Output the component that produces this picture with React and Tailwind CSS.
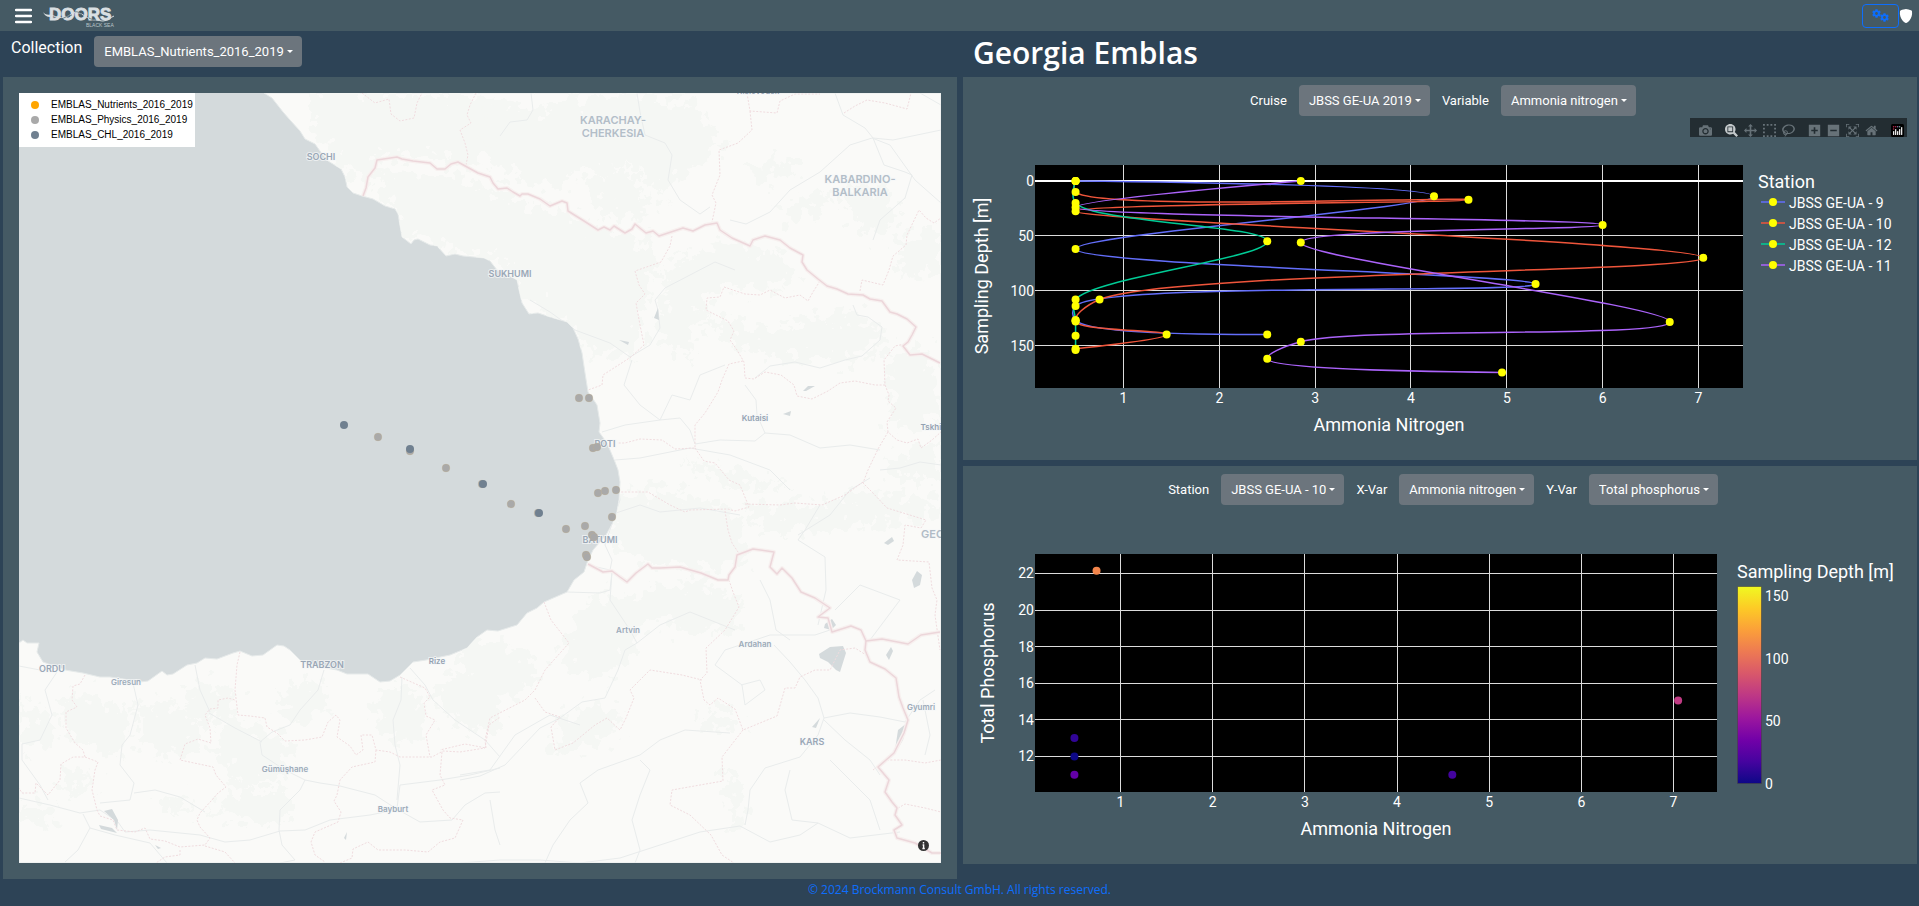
import { BsShieldFill } from "react-icons/bs";
import { FaCog } from "react-icons/fa";

/* ---------- shared controls ---------- */

function Picker({ id, label, options, labelClass }) {
  return (
    <div className="flex items-center gap-3">
      <label htmlFor={id} className={labelClass || "text-[13px] leading-5"}>
        {label}
      </label>
      <div className="relative">
        <select
          id={id}
          className="h-[31px] cursor-pointer appearance-none rounded bg-[#6c757d] pr-[18px] pl-[10px] text-[13px] text-white [field-sizing:content]"
        >
          {options.map((o) => (
            <option key={o}>{o}</option>
          ))}
        </select>
        <span className="pointer-events-none absolute top-[14px] right-[9px] border-x-[3px] border-t-[3px] border-x-transparent border-t-white" />
      </div>
    </div>
  );
}

function Logo() {
  return (
    <svg width="72" height="24" viewBox="43 4 72 24" role="img" aria-label="Doors Black Sea">
      <text x="49" y="20" className="font-['Liberation_Sans',sans-serif] text-[17px] font-bold" fill="#d9dfe2" stroke="#d9dfe2" strokeWidth="0.9">
        DOORS
      </text>
      <path d="M43 12c1 2 4 3 8 2.500L50 17c-3 0-6-2-7-5z" fill="#d9dfe2" />
      <path d="M50 15c5 1 10 4 16 2 5-2 8-6 13-4 6 2 11 8 17 7 3 0 4 1 7 1 5 0 8-4 11-5" fill="none" stroke="#d9dfe2" strokeWidth="1" />
      <path d="M61 19c4-1 7-4 11-4M75 12c2-1 5 1 7 3M89 18c2 1 4 2 7 2" fill="none" stroke="#455a64" strokeWidth="0.7" />
      <text x="86" y="27" className="font-['Liberation_Sans',sans-serif] text-[5px]" fill="#bcc5c9">
        BLACK SEA
      </text>
    </svg>
  );
}

/* ---------- map ---------- */

const COAST =
  "M264 93L272 98L283 112L290 120L300 131L305 139L315 144L320 151L328 161L341 169L345 177L347 187L353 193L362 196L373 199L385 206L395 209L398 214L400 226L402 237L411 244L414 240L418 239L430 245L437 246L446 256L455 254L463 256L484 258L490 261L497 270L510 276L517 280L519 290L522 303L529 314L538 313L550 317L567 322L573 328L578 339L582 353L585 373L588 392L593 399L597 405L600 423L599 432L607 443L615 462L618 470L620 482L619 500L616 517L606 535L593 550L587 563L584 572L574 580L567 592L544 602L537 608L527 613L517 625L498 631L487 630L477 637L467 648L450 655L426 660L413 662L400 675L390 681L380 682L368 674L347 674L337 670L320 667L302 662L290 650L284 646L277 645L263 655L252 656L240 651L233 653L217 659L205 658L197 663L187 665L173 674L167 675L162 671L148 681L140 682L130 680L110 677L100 677L83 673L65 670L43 662L37 652L39 643L27 643L23 640L19 643L19 863L941 863L941 93Z";

const FRONTIERS = [
  "363,196 366,188 368,177 375,168 377,160 397,157 402,159 413,161 430,163 437,169 445,169 451,164 458,162 467,167 478,173 490,177 493,183 498,189 507,188 513,192 520,196 522,194 528,194 540,199 550,206 562,201 567,203 568,211 584,221 598,230 604,227 610,230 614,226 625,233 632,229 635,224 641,229 646,233 653,231 659,236 668,233 683,228 693,231 705,225 717,223 720,230 732,238 750,246 753,240 765,236 780,240 790,248 803,255 802,262 807,270 818,279 827,286 837,289 848,294 863,295 870,299 882,301 890,312 897,314 907,319 916,327 912,335 908,342 903,346 910,355 922,354 930,358 940,363",
  "588,564 603,572 612,571 620,577 627,582 636,573 648,564 652,568 660,568 680,567 701,573 718,580 728,580 729,575 735,567 737,555 753,549 774,552 770,567 777,574 782,568 792,578 801,592 815,598 830,608 818,617 828,618 832,632 851,626 861,630 866,641 882,639 908,644 921,635 940,632",
  "866,641 865,650 870,662 885,669 896,678 899,697 903,708 908,720 904,733 894,753 886,760 878,767 889,780 885,792 892,802 897,808 895,815 902,825 894,830 897,838 915,843 932,853 941,853",
];

const REGION_BORDERS = [
  "362,93 375,103 389,99 391,114 400,121 414,118 417,103 422,93",
  "476,93 470,105 467,115 471,123 460,130 465,143 468,155 466,165",
  "747,93 750,111 777,113 780,101 795,94 820,94",
  "750,111 752,130 738,143 719,150 720,175 712,195 716,203 712,222",
  "844,113 855,106 867,100 885,103 907,109 911,93",
  "672,236 670,246 661,262 635,271 639,285 645,294 636,303 640,325 644,345 631,357 603,375 602,385 588,390",
  "820,281 813,292 808,301 800,295 785,298 770,290 760,295 745,294 724,287 720,297 707,298 706,310 728,321 734,331 730,340 737,350 744,362 745,378 754,379 765,372 781,375 794,385 797,396 812,399 828,391 840,383 855,381 875,385 885,385 884,360 895,346 905,344",
  "860,291 862,280 883,285 889,270 893,256 906,245 907,235 919,210 926,218 934,223 941,218",
  "885,385 889,395 888,401 896,408 887,422 888,432 897,440 907,443 918,439 921,448 932,440 941,432",
  "743,361 729,364 722,380 718,392 705,413 695,425 695,448 675,449 662,440 640,439 625,443 617,443",
  "695,448 704,461 715,463 729,480 740,485 749,507 735,511 728,509 690,510 685,512 670,505 648,492 620,492",
  "888,432 878,449 868,470 863,483 872,492 887,508 900,512 926,520 921,528 905,525 903,545 897,560 929,562 932,588 937,600 935,615 940,650",
  "725,511 728,530 732,543 740,555",
  "863,482 845,495 822,505 795,503 780,505 745,504",
  "729,580 733,592 739,607 725,630 706,648 707,673 700,680 704,700 710,705 718,698 735,709 743,730 777,716 785,688 795,688 800,677 815,670 830,670 840,650 855,648 866,655",
  "743,730 722,757 723,781 700,785 672,790 670,805 690,815 711,835 722,855 734,863",
  "544,602 551,620 569,643 545,670 535,690 525,700 490,718 485,740 486,748 465,744 440,750",
  "535,698 545,712 560,717 551,727 555,750 573,743 595,725 607,718 620,730 626,718 634,698 630,690 650,670 682,675 702,680",
  "240,652 237,665 235,690 238,715 250,716 265,718 267,727 277,733 285,741 305,740 322,737 328,722 336,715 340,720 337,737 350,746 356,755 363,750 361,735 372,735 376,750 390,752 400,757 432,757 443,751 460,752 485,748 489,725 500,717",
  "400,677 425,688 430,697 424,703 426,716 435,720 426,735 430,757",
  "376,750 375,762 352,767 340,780 337,795 334,801 341,812 338,822 315,832 311,842 315,855 325,862",
  "85,675 80,684 73,686 72,700 77,707 66,712 66,728 75,743 83,750 85,757 73,757 61,764 60,780 48,795 36,783 35,793 22,793 19,788",
  "85,757 98,762 95,770 92,790 97,810 100,816 113,820 117,830 135,832 145,828 150,839 165,841 180,847 205,845 210,838 200,827 197,820 200,813 212,800 218,793 226,787 216,775 213,767 180,760 185,744 198,739 211,743 210,728 205,715 210,709 218,708 218,700 228,698 235,700",
  "340,863 352,858 353,849 368,842 378,850 405,850 428,852 440,842 455,838 463,820 450,818 443,810 432,790 445,785 440,775 442,752",
  "180,850 180,855 165,857 156,863",
  "205,846 225,852 235,863",
  "873,770 885,760 905,760 925,763 941,760",
  "895,810 905,804 925,808 941,812",
];

const ROADS = [
  "531,93 533,110 527,120 510,122 500,136",
  "637,93 640,112 645,135 665,143 672,155 668,180 680,200 700,214 710,207",
  "730,220 746,224 770,212 790,190 820,172 850,145 872,138 890,145 915,180 941,203",
  "835,93 843,115 865,128 873,138 893,140 941,130",
  "873,138 884,165 905,172 912,175 905,198 880,220 873,240",
  "941,105 920,93",
  "530,300 550,312 575,330 610,343 630,357 650,345 660,328 658,310 655,300 665,288 690,275 715,262 735,270",
  "853,305 857,315 868,317 882,327 880,340 862,356 845,360 820,368 795,362 770,366 755,378",
  "602,432 625,425 660,420 680,418 690,430 695,444 720,440 755,441 765,433 790,435 820,448 850,445 880,450",
  "632,360 624,385 640,405 660,420 672,395 690,400 700,375 725,365",
  "765,433 757,415 756,400 745,385",
  "615,460 640,458 690,448 730,455 770,470 790,490",
  "880,470 900,468 920,462 941,465",
  "588,565 610,570 612,560 605,545 620,500 618,480",
  "567,592 600,593 610,590 612,572 610,600 622,618 630,630 637,643 625,650 618,670 605,698 582,702 560,718 540,728 505,765 480,776 460,780",
  "637,643 660,625 690,612 715,622 735,630",
  "774,645 790,662 805,680 818,698 824,718 818,735 800,757 765,768 750,790 748,810 745,825",
  "741,685 760,680 765,690 745,705 742,685 715,665 725,650 770,635 815,635 830,630",
  "824,720 845,740 870,760 880,775",
  "824,718 850,713 880,717 905,722 920,700 935,690",
  "923,700 930,735 925,755",
  "460,775 490,770 515,735 550,715 580,725",
  "580,783 598,770 640,755 660,740 685,730 730,733",
  "580,783 588,803 570,820 553,845 545,863",
  "460,863 500,860 540,860 580,863 620,858 660,845 700,832 740,826 770,842 800,835 818,823 850,838 900,832",
  "640,760 650,770 640,795 632,820 640,850 635,863",
  "790,770 785,790 792,820 818,823",
  "830,760 850,780 870,800 880,830",
  "19,798 50,805 80,813 100,810 118,822 125,832 150,830 200,835 225,842 250,840 280,831 305,830 330,820 370,815 395,810",
  "83,814 90,828 115,835 150,843 167,863",
  "90,828 78,850 65,862",
  "279,830 280,810 300,790 305,780 320,783 340,786 375,795 395,808 420,822 452,820 465,805 485,793 500,792",
  "279,830 282,845 295,860 280,863",
  "397,808 400,785 440,780 470,775 500,768",
  "324,670 318,690 300,710 290,725 272,732 260,742 262,755 285,770 305,780",
  "209,713 235,728 262,742",
  "410,668 425,685 433,700 455,720 485,740 500,757",
  "402,677 401,700 393,720 395,745 400,765 397,800",
  "19,666 40,670 60,668 85,672",
  "57,672 45,690 52,715 40,740 22,744 22,760 40,785 48,800",
  "133,683 138,705 130,735 122,745 120,765 134,783 130,800 100,803",
  "134,793 155,790 180,797 205,812",
  "195,665 200,690 210,712",
  "490,800 495,830 500,845",
  "820,505 805,530 798,540 825,557 826,590 818,625",
  "798,535 830,515 850,490 870,478",
  "610,515 640,505 660,512 700,508 740,515",
  "760,580 770,600 776,630 790,640",
  "870,640 900,600 860,585 835,610",
];

const WOODS = [
  "310,93 480,93 520,110 500,150 470,165 430,160 380,155 365,190 340,160 310,130",
  "375,170 450,175 500,195 560,215 640,240 660,265 640,320 640,350 600,360 560,320 520,300 500,262 440,245 400,235",
  "480,100 540,110 600,93 690,100 725,145 690,170 660,200 640,165 600,170 570,175 560,190 520,180 490,160",
  "600,165 640,175 650,215 610,220 590,190",
  "560,225 640,240 620,275 590,300 560,280",
  "665,270 720,240 780,255 800,280 770,290 720,285 700,310 690,360 660,340",
  "690,310 760,330 860,310 890,340 850,360 780,360 740,345",
  "745,165 790,160 800,175 760,180",
  "780,205 830,190 835,200 790,225",
  "850,185 890,190 900,215 870,240 850,215",
  "895,240 941,225 941,270 905,280",
  "600,500 640,490 700,495 740,520 750,560 700,570 640,560 610,535",
  "640,595 700,580 740,600 735,630 690,635 650,615 640,640 610,680 570,670 560,640 590,600",
  "750,505 830,500 880,490 941,500 930,520 870,525 800,530 760,530",
  "460,640 500,640 540,660 530,690 490,700 460,680",
  "200,680 235,690 235,715 200,725 180,705",
  "55,700 100,695 130,720 125,760 90,745 70,740",
  "20,700 50,715 50,745 25,750",
  "130,700 190,710 200,745 160,760 140,735",
  "225,715 290,740 285,775 240,790 215,750",
  "280,690 320,680 330,710 300,725 280,715",
  "380,690 420,690 430,730 400,745 375,725",
  "430,690 500,660 500,730 460,730",
  "240,790 290,790 290,825 250,825 210,810",
  "20,800 55,810 60,830 20,820",
  "560,720 600,700 625,720 600,745 555,755",
  "700,710 735,710 740,735 705,730",
  "725,770 740,780 745,820 735,830 725,800",
  "885,460 941,440 941,480 900,480",
  "680,460 740,470 790,490 730,490",
  "885,350 930,350 941,410 925,430 890,425",
  "158,795 185,797 195,815 165,815",
  "60,770 85,765 90,785 60,795",
];

const LAKES = [
  "819,654 830,647 843,646 846,653 840,672 836,670 828,662 820,658",
  "825,624 832,619 836,625 831,630 824,628",
  "912,580 917,571 922,575 920,585 914,588",
  "884,543 892,537 894,541 888,545",
  "886,655 891,647 893,651 889,660",
  "895,750 898,730 907,723 903,740 897,750",
  "803,391 808,386 815,386 806,391",
  "783,414 791,411 790,416",
  "99,825 112,828 117,833 101,829",
  "104,811 112,809 118,820 117,830 114,820",
  "344,838 347,832 346,840",
  "155,845 161,848 158,849",
  "654,318 658,308 659,320",
  "619,340 629,342 628,345",
  "812,727 820,718 816,728",
];

const LABELS = [
  { t: "KARACHAY-", x: 613, y: 124, s: "region" },
  { t: "CHERKESIA", x: 613, y: 137, s: "region" },
  { t: "KABARDINO-", x: 860, y: 183, s: "region" },
  { t: "BALKARIA", x: 860, y: 196, s: "region" },
  { t: "GEORGIA", x: 946, y: 538, s: "country" },
  { t: "Kislovodsk", x: 758, y: 94, s: "town" },
  { t: "SOCHI", x: 321, y: 160, s: "city" },
  { t: "SUKHUMI", x: 510, y: 277, s: "city" },
  { t: "POTI", x: 605, y: 447, s: "city" },
  { t: "BATUMI", x: 600, y: 543, s: "city" },
  { t: "TRABZON", x: 322, y: 668, s: "city" },
  { t: "ORDU", x: 52, y: 672, s: "city" },
  { t: "KARS", x: 812, y: 745, s: "city" },
  { t: "Kutaisi", x: 755, y: 421, s: "town" },
  { t: "Tskhinvali", x: 940, y: 430, s: "town" },
  { t: "Rize", x: 437, y: 664, s: "town" },
  { t: "Giresun", x: 126, y: 685, s: "small" },
  { t: "Artvin", x: 628, y: 633, s: "small" },
  { t: "Ardahan", x: 755, y: 647, s: "small" },
  { t: "Gyumri", x: 921, y: 710, s: "small" },
  { t: "Gümüşhane", x: 285, y: 772, s: "small" },
  { t: "Bayburt", x: 393, y: 812, s: "small" },
];

const LABEL_STYLE = {
  country: "text-[11px] fill-[#b0bbc6]",
  region: "text-[11px] fill-[#b3bec8]",
  city: "text-[9px] fill-[#9aa7b6]",
  town: "text-[8px] fill-[#94a2b2]",
  small: "text-[8px] fill-[#9dabb9]",
};

const PHYSICS = [
  [378, 437], [410, 451], [446, 468], [482, 484], [511, 504], [538, 513], [566, 529], [585, 526],
  [592, 535], [594, 537], [612, 517], [586, 555], [587, 557], [598, 493], [605, 491], [616, 490],
  [579, 398], [589, 398], [593, 448], [597, 447],
];
const CHLOROPHYLL = [[344, 425], [410, 449], [483, 484], [539, 513]];

function StationMap() {
  return (
    <svg viewBox="19 93 922 770" className="block h-auto w-full" role="img" aria-label="Map of sampling stations in the eastern Black Sea">
      <defs>
        <filter id="ragged" x="-10%" y="-10%" width="120%" height="120%">
          <feTurbulence type="fractalNoise" baseFrequency="0.09" numOctaves="3" seed="4" />
          <feDisplacementMap in="SourceGraphic" scale="44" xChannelSelector="R" yChannelSelector="G" />
        </filter>
        <clipPath id="land"><path d={COAST} /></clipPath>
      </defs>
      <rect x="19" y="93" width="922" height="770" fill="#d4dadc" />
      <path d={COAST} fill="#fafaf8" stroke="#e6eaea" strokeWidth="1" strokeLinejoin="round" />
      <g clipPath="url(#land)">
        <g fill="#f5f7f4" filter="url(#ragged)">
          {WOODS.map((p) => <polygon key={p} points={p} />)}
        </g>
        <g fill="none" stroke="#e9ecec" strokeWidth="1" strokeLinejoin="round">
          {ROADS.map((p) => <polyline key={p} points={p} />)}
        </g>
        <g fill="#d4dadc">
          {LAKES.map((p) => <polygon key={p} points={p} />)}
        </g>
        <g fill="none" stroke="#f0dcdf" strokeWidth="1" strokeDasharray="2 1.5" strokeLinejoin="round">
          {REGION_BORDERS.map((p) => <polyline key={p} points={p} />)}
        </g>
        <g fill="none" strokeLinejoin="round">
          {FRONTIERS.map((p) => <polyline key={p} points={p} stroke="#f7f0ef" strokeWidth="4" />)}
          {FRONTIERS.map((p) => <polyline key={p} points={p} stroke="#ecd6da" strokeWidth="1.5" />)}
        </g>
      </g>
      <g textAnchor="middle" stroke="#f6f8f8" strokeWidth="2" strokeOpacity="0.7" paintOrder="stroke" className="font-['Inter',sans-serif] font-semibold">
        {LABELS.map((l) => (
          <text key={l.t} x={l.x} y={l.y} className={LABEL_STYLE[l.s]}>{l.t}</text>
        ))}
      </g>
      {PHYSICS.map(([x, y]) => (
        <circle key={x + "-" + y} cx={x} cy={y} r="3.9" fill="#a9a9a9" stroke="#d0b27a" strokeOpacity="0.5" strokeWidth="0.4" />
      ))}
      {CHLOROPHYLL.map(([x, y]) => <circle key={x} cx={x} cy={y} r="4" fill="#708090" />)}
    </svg>
  );
}

const COLLECTIONS = [
  ["EMBLAS_Nutrients_2016_2019", "bg-[#ffa500]"],
  ["EMBLAS_Physics_2016_2019", "bg-[#a9a9a9]"],
  ["EMBLAS_CHL_2016_2019", "bg-[#708090]"],
];

function MapLegend() {
  return (
    <ul className="absolute top-0 left-0 bg-white pt-1 pr-[2px] pb-[5px] pl-3 font-['Liberation_Sans',sans-serif] text-[10px] leading-[15px] text-black">
      {COLLECTIONS.map(([name, color]) => (
        <li key={name} className="flex items-center gap-3">
          <span className={"size-2 rounded-full " + color} />
          {name}
        </li>
      ))}
    </ul>
  );
}

/* ---------- depth profile chart ---------- */

const px = (v) => 1123.5 + (v - 1) * 95.83;
const py = (d) => 181 + d * 1.097;

const SERIES = [
  { name: "JBSS GE-UA - 9", color: "#636efa", pts: [[0.5, 0], [4.24, 14], [0.5, 62], [5.3, 94], [0.5, 114], [0.5, 127], [2.5, 140]] },
  { name: "JBSS GE-UA - 10", color: "#ef553b", pts: [[0.5, 0], [0.5, 10], [4.6, 17], [0.5, 27.5], [7.05, 70], [0.75, 108], [0.5, 128], [1.45, 140], [0.5, 153]] },
  { name: "JBSS GE-UA - 12", color: "#00cc96", pts: [[0.5, 0], [0.5, 20], [2.5, 55], [0.5, 108], [0.5, 127], [0.5, 141], [0.5, 154]] },
  { name: "JBSS GE-UA - 11", color: "#ab63fa", pts: [[2.85, 0], [0.5, 24], [6, 40], [2.85, 56], [6.7, 128.5], [2.85, 146.5], [2.5, 162], [4.95, 174.5]] },
];

// Centripetal Catmull-Rom handles on both sides of the middle point
function handles(a, b, c) {
  const d1 = [a[0] - b[0], a[1] - b[1]];
  const d2 = [c[0] - b[0], c[1] - b[1]];
  const l1 = Math.pow(d1[0] * d1[0] + d1[1] * d1[1], 0.25);
  const l2 = Math.pow(d2[0] * d2[0] + d2[1] * d2[1], 0.25);
  const n = [0, 1].map((k) => l2 * l2 * d1[k] - l1 * l1 * d2[k]);
  const before = 3 * l2 * (l1 + l2);
  const after = 3 * l1 * (l1 + l2);
  return [
    [b[0] + n[0] / before, b[1] + n[1] / before],
    [b[0] - n[0] / after, b[1] - n[1] / after],
  ];
}

function splinePath(data) {
  const p = data.map(([x, y]) => [px(x), py(y)]);
  const t = [];
  for (let i = 1; i < p.length - 1; i++) t.push(handles(p[i - 1], p[i], p[i + 1]));
  let d = `M${p[0]}Q${t[0][0]} ${p[1]}`;
  for (let i = 2; i < p.length - 1; i++) d += `C${t[i - 2][1]} ${t[i - 1][0]} ${p[i]}`;
  return d + `Q${t[t.length - 1][1]} ${p[p.length - 1]}`;
}

function DepthChart() {
  return (
    <svg viewBox="963 116 954 344" className="block h-auto w-full" fill="#fff" role="img" aria-label="Ammonia nitrogen by sampling depth">
      <rect x="1035" y="165" width="708" height="223" fill="#000" />
      <g stroke="#dcdcdc" strokeWidth="1" shapeRendering="crispEdges">
        {[1, 2, 3, 4, 5, 6, 7].map((v) => <path key={v} d={`M${px(v)} 165V388`} />)}
        {[50, 100, 150].map((v) => <path key={v} d={`M1035 ${py(v)}H1743`} />)}
      </g>
      <path d="M1035 181H1743" stroke="#fff" strokeWidth="2" />
      {SERIES.map((s) => <path key={s.name} d={splinePath(s.pts)} fill="none" stroke={s.color} strokeWidth="1.5" />)}
      {SERIES.map((s) => s.pts.map(([x, y]) => <circle key={s.name + x + y} cx={px(x)} cy={py(y)} r="4" fill="#ff0" />))}
      <g className="text-[14px]">
        {[1, 2, 3, 4, 5, 6, 7].map((v) => <text key={v} x={px(v)} y="403" textAnchor="middle">{v}</text>)}
        {[0, 50, 100, 150].map((v) => <text key={v} x="1034" y={py(v) + 5} textAnchor="end">{v}</text>)}
      </g>
      <g className="text-[18px]">
        <text x="1389" y="431" textAnchor="middle">Ammonia Nitrogen</text>
        <text transform="translate(988 276) rotate(-90)" textAnchor="middle">Sampling Depth [m]</text>
        <text x="1758" y="188">Station</text>
      </g>
      {SERIES.map((s, i) => (
        <g key={s.name}>
          <path d={`M1761 ${202 + i * 21}h24`} stroke={s.color} strokeWidth="1.5" />
          <circle cx="1773" cy={202 + i * 21} r="4" fill="#ff0" />
          <text x="1789" y={208 + i * 21} className="text-[14px]">{s.name}</text>
        </g>
      ))}
    </svg>
  );
}

/* ---------- modebar ---------- */

const ICONS = {
  camera: [1000, "m500 450c-83 0-150-67-150-150 0-83 67-150 150-150 83 0 150 67 150 150 0 83-67 150-150 150z m400 150h-120c-16 0-34 13-39 29l-31 93c-6 15-23 28-40 28h-340c-16 0-34-13-39-28l-31-94c-6-15-23-28-40-28h-120c-55 0-100-45-100-100v-450c0-55 45-100 100-100h800c55 0 100 45 100 100v450c0 55-45 100-100 100z m-400-550c-138 0-250 112-250 250 0 138 112 250 250 250 138 0 250-112 250-250 0-138-112-250-250-250z m365 380c-19 0-35 16-35 35 0 19 16 35 35 35 19 0 35-16 35-35 0-19-16-35-35-35z"],
  zoom: [1000, "m1000-25l-250 251c40 63 63 138 63 218 0 224-182 406-407 406-224 0-406-182-406-406s183-406 407-406c80 0 155 22 218 62l250-250 125 125z m-812 250l0 438 437 0 0-438-437 0z m62 375l313 0 0-312-313 0 0 312z"],
  pan: [1000, "m1000 350l-187 188 0-125-250 0 0 250 125 0-188 187-187-187 125 0 0-250-250 0 0 125-188-188 186-187 0 125 252 0 0-250-125 0 187-188 188 188-125 0 0 250 250 0 0-126 187 188z"],
  select: [1000, "m0 850l0-143 143 0 0 143-143 0z m286 0l0-143 143 0 0 143-143 0z m285 0l0-143 143 0 0 143-143 0z m286 0l0-143 143 0 0 143-143 0z m-857-286l0-143 143 0 0 143-143 0z m857 0l0-143 143 0 0 143-143 0z m-857-285l0-143 143 0 0 143-143 0z m857 0l0-143 143 0 0 143-143 0z m-857-286l0-143 143 0 0 143-143 0z m286 0l0-143 143 0 0 143-143 0z m285 0l0-143 143 0 0 143-143 0z m286 0l0-143 143 0 0 143-143 0z"],
  lasso: [1031, "m1018 538c-36 207-290 336-568 286-277-48-473-256-436-463 10-57 36-108 76-151-13-66 11-137 68-183 34-28 75-41 114-42l-55-70 0 0c-2-1-3-2-4-3-10-14-8-34 5-45 14-11 34-8 45 4 1 1 2 3 2 5l0 0 113 140c16 11 31 24 45 40 4 3 6 7 8 11 48-3 100 0 151 9 278 48 473 255 436 462z m-624-379c-80 14-149 48-197 96 42 42 109 47 156 9 33-26 47-66 41-105z m-187-74c-19 16-33 37-39 60 50-32 109-55 174-68-42-25-95-24-135 8z m360 75c-34-7-69-9-102-8 8 62-16 128-68 170-73 59-175 54-244-5-9 20-16 40-20 61-28 159 121 317 333 354s407-60 434-217c28-159-121-318-333-355z"],
  plus: [875, "m1 787l0-875 875 0 0 875-875 0z m687-500l-187 0 0-187-125 0 0 187-188 0 0 125 188 0 0 187 125 0 0-187 187 0 0-125z"],
  minus: [875, "m0 788l0-876 875 0 0 876-875 0z m688-500l-500 0 0 125 500 0 0-125z"],
  autoscale: [1000, "m250 850l-187 0-63 0 0-62 0-188 63 0 0 188 187 0 0 62z m688 0l-188 0 0-62 188 0 0-188 62 0 0 188 0 62-62 0z m-875-938l0 188-63 0 0-188 0-62 63 0 187 0 0 62-187 0z m875 188l0-188-188 0 0-62 188 0 62 0 0 62 0 188-62 0z m-125 188l-1 0-93-94-156 156 156 156 92-93 2 0 0 250-250 0 0-2 93-92-156-156-156 156 94 92 0 2-250 0 0-250 0 0 93 93 157-156-157-156-93 94 0 0 0-250 250 0 0 0-94 93 156 157 156-157-93-93 0 0 250 0 0 250z"],
  home: [928, "m786 296v-267q0-15-11-26t-25-10h-214v214h-143v-214h-214q-15 0-25 10t-11 26v267q0 1 0 2t0 2l321 264 321-264q1-1 1-4z m124 39l-34-41q-5-5-12-6h-2q-7 0-12 3l-386 322-386-322q-7-4-13-4-7 2-12 7l-35 41q-4 5-3 13t6 12l401 334q18 15 42 15t43-15l136-114v109q0 8 5 13t13 5h107q8 0 13-5t5-13v-227l122-102q5-5 6-12t-4-13z"],
};

function ModeButton({ icon, label, active }) {
  const [w, d] = ICONS[icon];
  return (
    <button type="button" aria-label={label} className="flex w-[19px] justify-center">
      <svg viewBox={`0 0 ${w} 1000`} className={"h-[13px] w-[13px] " + (active ? "fill-[#c4c9cb]" : "fill-[#677278]")}>
        <path d={d} transform="matrix(1 0 0 -1 0 850)" />
      </svg>
    </button>
  );
}

function Modebar() {
  return (
    <div className="absolute top-[41px] right-[10px] flex h-[19px] items-end gap-[7px] bg-[#232d32] pl-[6px]">
      <ModeButton icon="camera" label="Download plot as a png" />
      <div className="flex">
        <ModeButton icon="zoom" label="Zoom" active />
        <ModeButton icon="pan" label="Pan" />
        <ModeButton icon="select" label="Box Select" />
        <ModeButton icon="lasso" label="Lasso Select" />
      </div>
      <div className="flex">
        <ModeButton icon="plus" label="Zoom in" />
        <ModeButton icon="minus" label="Zoom out" />
        <ModeButton icon="autoscale" label="Autoscale" />
        <ModeButton icon="home" label="Reset axes" />
      </div>
      <a href="#plotly" aria-label="Produced with Plotly" className="flex w-[19px] justify-center">
        <svg viewBox="0 0 13 13" className="h-[13px] w-[13px]">
          <rect width="13" height="13" rx="1.5" fill="#000" />
          <g fill="#e8e8e8">
            <rect x="2" y="7" width="1.3" height="4" rx="0.6" />
            <rect x="4" y="5" width="1.3" height="6" rx="0.6" />
            <rect x="6" y="7" width="1.3" height="4" rx="0.6" />
            <rect x="8" y="5" width="1.3" height="6" rx="0.6" />
            <rect x="10" y="3" width="1.3" height="8" rx="0.6" />
          </g>
          <g fill="#b5274d">
            <circle cx="2.6" cy="2.8" r="0.8" />
            <circle cx="4.6" cy="2.8" r="0.8" />
            <circle cx="2.6" cy="5" r="0.8" />
          </g>
          <circle cx="6.6" cy="2.8" r="0.8" fill="#8d6d9e" />
          <circle cx="8.6" cy="2.8" r="0.8" fill="#6aa5a5" />
        </svg>
      </a>
    </div>
  );
}

/* ---------- scatter chart ---------- */

const qx = (v) => 1120.5 + (v - 1) * 92.17;
const qy = (v) => 573.4 + (22 - v) * 18.3;

const SAMPLES = [
  [0.74, 22.15, "#f3854b"],
  [0.5, 13, "#310597"],
  [0.5, 12, "#0d0887"],
  [0.5, 11, "#6300a7"],
  [4.6, 11, "#43039e"],
  [7.05, 15.05, "#c03a83"],
];

const PLASMA = ["#0d0887", "#46039f", "#7201a8", "#9c179e", "#bd3786", "#d8576b", "#ed7953", "#fb9f3a", "#fdca26", "#f0f921"];

function ScatterChart() {
  return (
    <svg viewBox="963 505 954 359" className="block h-auto w-full" fill="#fff" role="img" aria-label="Total phosphorus against ammonia nitrogen">
      <defs>
        <linearGradient id="depthScale" x1="0" y1="1" x2="0" y2="0">
          {PLASMA.map((c, i) => <stop key={c} offset={i / 9} stopColor={c} />)}
        </linearGradient>
      </defs>
      <rect x="1035" y="554" width="682" height="238" fill="#000" />
      <g stroke="#dcdcdc" strokeWidth="1" shapeRendering="crispEdges">
        {[1, 2, 3, 4, 5, 6, 7].map((v) => <path key={v} d={`M${qx(v)} 554V792`} />)}
        {[12, 14, 16, 18, 20, 22].map((v) => <path key={v} d={`M1035 ${qy(v)}H1717`} />)}
      </g>
      {SAMPLES.map(([x, y, c]) => <circle key={c} cx={qx(x)} cy={qy(y)} r="4" fill={c} />)}
      <g className="text-[14px]">
        {[1, 2, 3, 4, 5, 6, 7].map((v) => <text key={v} x={qx(v)} y="807" textAnchor="middle">{v}</text>)}
        {[12, 14, 16, 18, 20, 22].map((v) => <text key={v} x="1034" y={qy(v) + 5} textAnchor="end">{v}</text>)}
        {[0, 50, 100, 150].map((v) => <text key={v} x="1765" y={789 - v * 1.253}>{v}</text>)}
      </g>
      <g className="text-[18px]">
        <text x="1376" y="835" textAnchor="middle">Ammonia Nitrogen</text>
        <text transform="translate(994 673) rotate(-90)" textAnchor="middle">Total Phosphorus</text>
        <text x="1737" y="578">Sampling Depth [m]</text>
      </g>
      <rect x="1737.5" y="586.5" width="24" height="197" fill="url(#depthScale)" stroke="#444" strokeOpacity="0.6" />
    </svg>
  );
}

/* ---------- page ---------- */

export default function App() {
  return (
    <div className="flex min-h-screen flex-col bg-[#2d4356] font-['Roboto',sans-serif] text-white">
      <header className="flex h-[31px] items-center bg-[#455a64] pr-[6px] pl-[15px]">
        <button type="button" aria-label="Open menu">
          <svg width="17" height="16" viewBox="0 0 17 16" stroke="#fff" strokeWidth="2.4" strokeLinecap="round">
            <path d="M1 2H16M1 8H16M1 14H16" />
          </svg>
        </button>
        <a href="#home" className="ml-[11px]">
          <Logo />
        </a>
        <div className="ml-auto flex items-center">
          <button type="button" aria-label="Settings" className="flex h-6 w-[37px] items-center justify-center rounded border border-[#0d6efd] text-[#0d6efd]">
            <FaCog className="mb-1 size-[9px]" />
            <FaCog className="mt-1 -ml-px size-[9px]" />
          </button>
          <BsShieldFill className="size-[14px]" />
        </div>
      </header>

      <div className="grid grid-cols-2 gap-x-[6px] pr-[2px] pl-[3px]">
        <div className="flex h-[46px] items-start pt-[5px] pl-2">
          <Picker
            id="collection"
            label="Collection"
            labelClass="mb-2 text-[16px] leading-5"
            options={["EMBLAS_Nutrients_2016_2019", "EMBLAS_Physics_2016_2019", "EMBLAS_CHL_2016_2019"]}
          />
        </div>
        <h1 className="pl-[10px] font-['Open_Sans','Noto_Sans',sans-serif] text-[30px] leading-[44px] font-semibold">Georgia Emblas</h1>

        <section className="bg-[#455a64] p-4">
          <div className="relative">
            <StationMap />
            <MapLegend />
            <button type="button" aria-label="Toggle attribution" className="absolute right-3 bottom-3">
              <svg width="11" height="11" viewBox="0 0 11 11">
                <circle cx="5.5" cy="5.5" r="5.5" fill="#333" />
                <path d="M5.500 2v1.600M4.600 5H5.600V8.500M4.400 8.500H6.800" stroke="#fff" strokeWidth="1.4" fill="none" />
              </svg>
            </button>
          </div>
        </section>

        <div className="flex flex-col gap-[6px]">
          <section className="relative bg-[#455a64] pt-2">
            <div className="flex justify-center gap-3 pl-[6px]">
              <Picker id="cruise" label="Cruise" options={["JBSS GE-UA 2019"]} />
              <Picker id="variable" label="Variable" options={["Ammonia nitrogen", "Total phosphorus"]} />
            </div>
            <DepthChart />
            <Modebar />
          </section>
          <section className="bg-[#455a64] pt-2">
            <div className="flex justify-center gap-3 pl-[6px]">
              <Picker id="station" label="Station" options={["JBSS GE-UA - 10", "JBSS GE-UA - 9", "JBSS GE-UA - 11", "JBSS GE-UA - 12"]} />
              <Picker id="xvar" label="X-Var" options={["Ammonia nitrogen", "Total phosphorus"]} />
              <Picker id="yvar" label="Y-Var" options={["Total phosphorus", "Ammonia nitrogen"]} />
            </div>
            <ScatterChart />
          </section>
        </div>
      </div>

      <footer className="py-px text-center font-['Open_Sans','Noto_Sans',sans-serif] text-[12px] leading-5 text-[#0d6efd]">
        © 2024 Brockmann Consult GmbH. All rights reserved.
      </footer>
    </div>
  );
}
